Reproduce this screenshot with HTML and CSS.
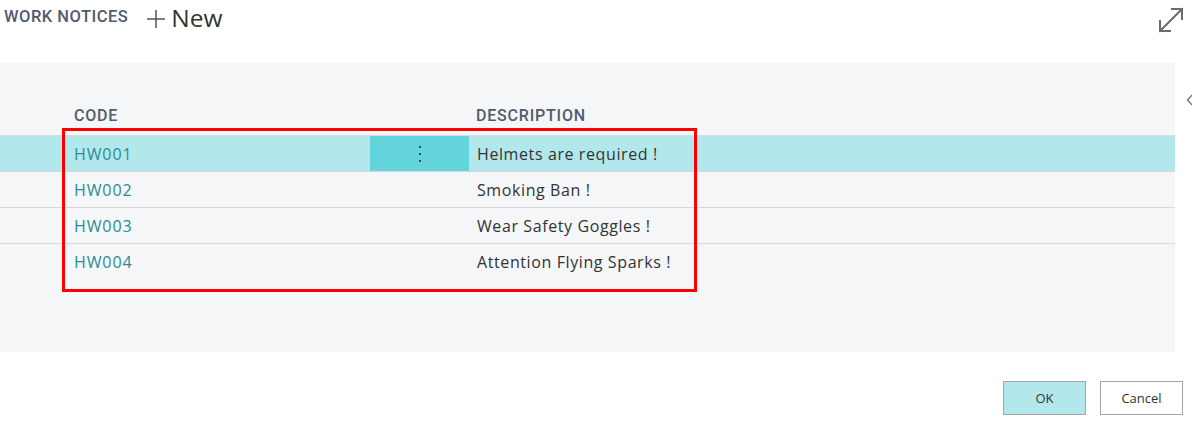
FILE: index.html
```html
<!DOCTYPE html>
<html>
<head>
<meta charset="utf-8">
<link rel="stylesheet" href="styles.css">
</head>
<body>
<div class="page">
  <header class="topbar">
    <div class="title">WORK NOTICES</div>
    <button class="new-btn">
      <svg class="plus" width="18" height="18" viewBox="0 0 18 18"><path d="M9 0 V18 M0 9 H18" stroke="#555" stroke-width="1.5" fill="none"/></svg>
      <span>New</span>
    </button>
    <div class="spacer"></div>
    <svg class="expand" width="28" height="28" viewBox="0 0 28 28">
      <path d="M3 25 L25 3 M3 25 L3 15 M3 25 L13 25 M25 3 L15 3 M25 3 L25 13" fill="none" stroke="#6b6b6b" stroke-width="2" stroke-linecap="square"/>
    </svg>
  </header>
  <div class="body-row">
    <section class="panel">
      <div class="grid">
        <div class="row head">
          <div class="c-code">CODE</div>
          <div class="c-dots"></div>
          <div class="c-desc">DESCRIPTION</div>
        </div>
        <div class="row sel">
          <div class="c-code link">HW001</div>
          <div class="c-dots active"><span class="vdots"><i></i><i></i><i></i></span></div>
          <div class="c-desc">Helmets are required !</div>
        </div>
        <div class="row">
          <div class="c-code link">HW002</div>
          <div class="c-dots"></div>
          <div class="c-desc">Smoking Ban !</div>
        </div>
        <div class="row">
          <div class="c-code link">HW003</div>
          <div class="c-dots"></div>
          <div class="c-desc">Wear Safety Goggles !</div>
        </div>
        <div class="row last">
          <div class="c-code link">HW004</div>
          <div class="c-dots"></div>
          <div class="c-desc">Attention Flying Sparks !</div>
        </div>
      </div>
      <div class="highlight"></div>
    </section>
    <div class="side">
      <svg class="chev" width="8" height="12" viewBox="0 0 8 12"><path d="M6 1 L1.5 6 L6 11" fill="none" stroke="#777" stroke-width="1.4"/></svg>
    </div>
  </div>
  <footer class="actions">
    <button class="btn ok">OK</button>
    <button class="btn">Cancel</button>
  </footer>
</div>
</body>
</html>
```
FILE: styles.css
```css
* { box-sizing: border-box; }
html, body { margin: 0; padding: 0; background: #fff; }
body { width: 1192px; height: 424px; overflow: hidden; font-family: "Open Sans", "Noto Sans", sans-serif; }
.page { display: flex; flex-direction: column; height: 424px; }

.topbar { height: 63px; display: flex; align-items: flex-start; padding: 0 7px 0 4px; }
.title { font-family: "Roboto", sans-serif; font-weight: 500; font-size: 16.5px; color: #505c6d; margin-top: 7px; letter-spacing: 0.5px; }
.new-btn { border: 0; background: none; padding: 0; margin: 1px 0 0 19px; font-family: "Open Sans", sans-serif; font-weight: 400; font-size: 24.5px; color: #333; display: flex; align-items: center; line-height: 34px; }
.plus { margin-right: 6px; margin-top: 2px; }
.spacer { flex: 1; }
.expand { margin-top: 6px; }

.body-row { display: flex; height: 289px; }
.panel { position: relative; width: 1175px; flex-shrink: 0; background: #f5f6f8; padding-top: 37px; }
.side { flex: 1; padding: 26px 0 0 11px; }

.row { display: grid; grid-template-columns: 370px 99px 1fr; height: 36px; border-bottom: 1px solid #d8d8da; align-items: center; font-size: 16px; letter-spacing: 0.6px; }
.row.head { height: 36px; border-bottom: 1px solid #dcdcde; padding-bottom: 4px; }
.row.last { border-bottom: 0; }
.row.head > div { font-family: "Roboto", sans-serif; font-weight: 500; font-size: 16px; color: #505c6d; letter-spacing: 0.8px; }
.c-code { padding-left: 74px; }
.c-desc { padding-left: 8px; color: #333; }
.row.head .c-desc { padding-left: 7px; }
.link { color: #2b8b96; letter-spacing: 0.9px; }
.row.sel { background: #b2e8ec; }
.c-dots { height: 100%; display: flex; align-items: center; justify-content: center; }
.c-dots.active { background: #63d3dc; }
.vdots { display: flex; flex-direction: column; gap: 5px; }
.vdots i { display: block; width: 2px; height: 2px; background: #2f4a50; }

.highlight { position: absolute; left: 62px; top: 65px; width: 635px; height: 164px; border: 3px solid #ff0000; }

.actions { display: flex; justify-content: flex-end; gap: 14px; padding: 29px 9px 0 0; }
.btn { width: 83px; height: 34px; background: #fff; border: 1px solid #a6a6a6; font-family: "Open Sans", sans-serif; font-size: 13px; color: #333; padding: 0; }
.btn.ok { background: #b2e8ec; }
```
